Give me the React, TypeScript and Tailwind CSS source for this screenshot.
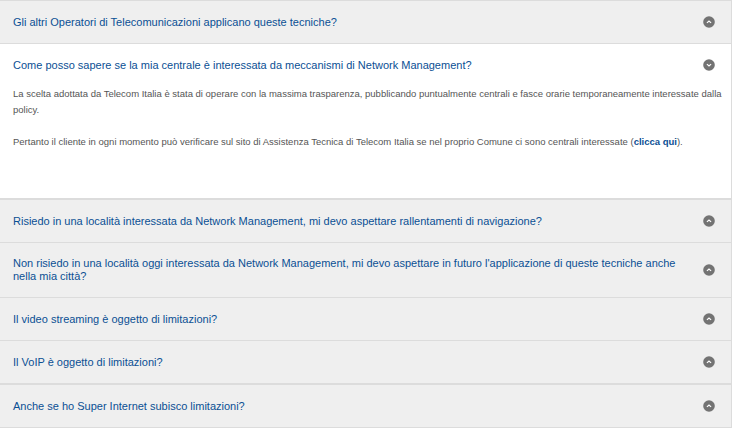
import { useState } from "react";

interface FaqItem {
  q: string;
  thickTop?: boolean;
}

const items: FaqItem[] = [
  { q: "Gli altri Operatori di Telecomunicazioni applicano queste tecniche?" },
  { q: "Come posso sapere se la mia centrale è interessata da meccanismi di Network Management?" },
  { q: "Risiedo in una località interessata da Network Management, mi devo aspettare rallentamenti di navigazione?", thickTop: true },
  {
    q: "Non risiedo in una località oggi interessata da Network Management, mi devo aspettare in futuro l'applicazione di queste tecniche anche nella mia città?",
  },
  { q: "Il video streaming è oggetto di limitazioni?" },
  { q: "Il VoIP è oggetto di limitazioni?" },
  { q: "Anche se ho Super Internet subisco limitazioni?", thickTop: true },
];

function Toggle({ open }: { open: boolean }) {
  return (
    <svg width="12" height="12" viewBox="0 0 12 12" className="shrink-0">
      <circle cx="6" cy="6" r="5.8" fill="#737373" />
      {open ? (
        <path d="M3.9 5.1 L6 7 L8.1 5.1" stroke="#fff" strokeWidth="1.2" fill="none" />
      ) : (
        <path d="M3.9 6.9 L6 5 L8.1 6.9" stroke="#fff" strokeWidth="1.2" fill="none" />
      )}
    </svg>
  );
}

export default function App() {
  const [openIdx, setOpenIdx] = useState(1);

  return (
    <div className="w-[732px] h-[429px] bg-white overflow-hidden font-['Liberation_Sans',Arial,sans-serif]">
      <div className="border-t border-r border-b border-[#dcdcdc]">
        {items.map((item, i) => {
          const open = i === openIdx;
          return (
            <div
              key={i}
              className={`${i > 0 ? (item.thickTop ? "border-t-2" : "border-t") : ""} border-[#dcdcdc] ${
                open ? "bg-white" : "bg-[#efefef]"
              }`}
            >
              <button
                type="button"
                onClick={() => setOpenIdx(open ? -1 : i)}
                className="w-full min-h-[42px] flex items-center justify-between gap-6 pl-[13px] pr-[16px] py-[14px] text-left"
              >
                <span className="text-[11px] leading-[13px] text-[#0b4f94]">{item.q}</span>
                <Toggle open={open} />
              </button>
              {open && (
                <div className="pl-[13px] pr-[4px] pb-[48px] text-[9.5px] leading-[16px] text-[#555]">
                  <p>
                    La scelta adottata da Telecom Italia è stata di operare con la massima trasparenza,
                    pubblicando puntualmente centrali e fasce orarie temporaneamente interessate dalla policy.
                  </p>
                  <p className="mt-[16px]">
                    Pertanto il cliente in ogni momento può verificare sul sito di Assistenza Tecnica di Telecom
                    Italia se nel proprio Comune ci sono centrali interessate (
                    <a href="#" className="font-bold text-[#0b4f94]">
                      clicca qui
                    </a>
                    ).
                  </p>
                </div>
              )}
            </div>
          );
        })}
      </div>
    </div>
  );
}
